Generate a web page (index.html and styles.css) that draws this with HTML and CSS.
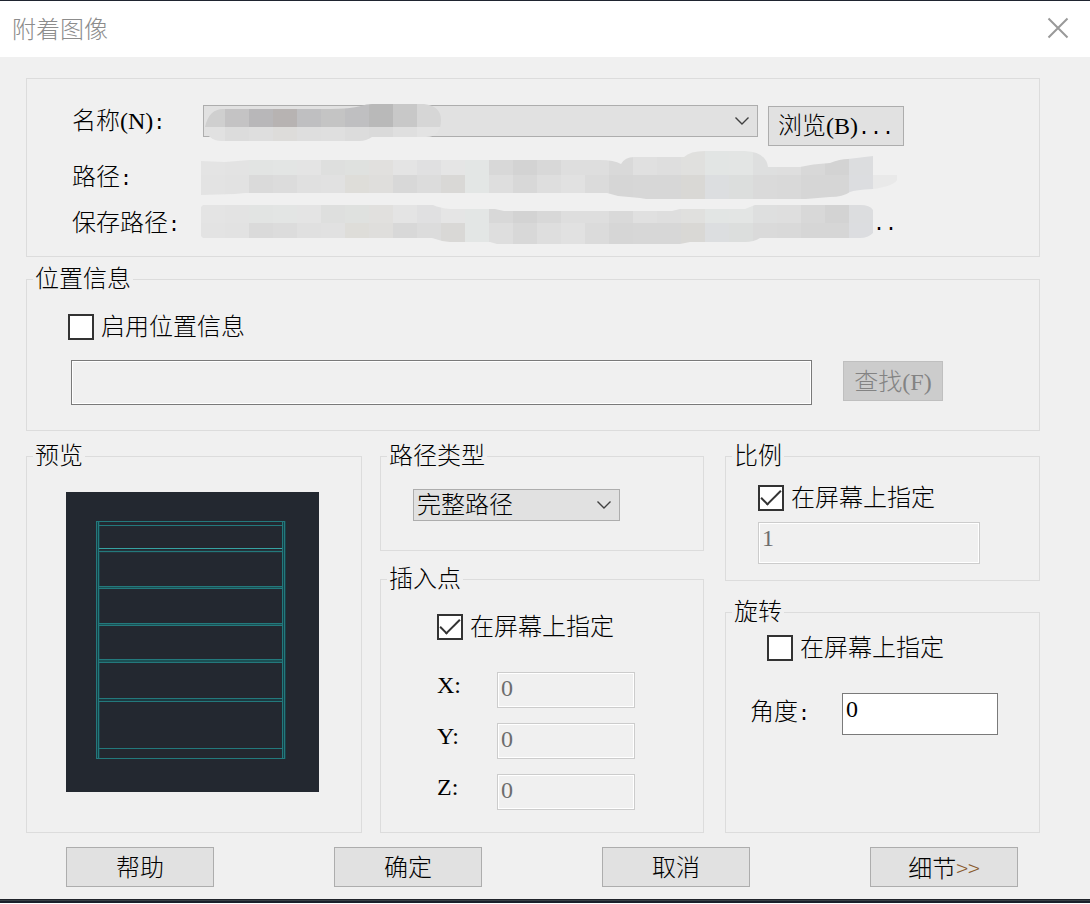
FILE: index.html
```html
<!DOCTYPE html>
<html lang="zh-CN">
<head>
<meta charset="utf-8">
<title>附着图像</title>
<link rel="stylesheet" href="styles.css">
</head>
<body>
<main class="dialog">
  <header class="titlebar">
    <h1 class="title">附着图像</h1>
    <button class="close" type="button" aria-label="关闭">
      <svg width="22" height="22" viewBox="0 0 22 22"><path d="M1.5 1.5 20.5 20.5M20.5 1.5 1.5 20.5"/></svg>
    </button>
  </header>

  <form class="content">
    <section class="group source">
      <label class="source-label" for="name">名称(N)<span class="mono">:</span></label>
      <div class="name-field">
        <div class="select-wrap">
          <select id="name"><option></option></select>
          <svg class="chevron" width="16" height="10" viewBox="0 0 16 10"><path d="M1.5 1.5 8 8 14.5 1.5"/></svg>
        </div>
        <svg class="mask mask-name" data-mask="name" width="236" height="38" viewBox="205 104 236 38"></svg>
      </div>
      <button class="button browse" type="button">浏览(B)<span class="mono">...</span></button>

      <span class="source-label">路径<span class="mono">:</span></span>
      <div class="source-value"><svg class="mask" data-mask="path" width="696" height="52" viewBox="201 151 696 52"></svg></div>

      <span class="source-label">保存路径<span class="mono">:</span></span>
      <div class="source-value"><svg class="mask" data-mask="saved" width="672" height="40" viewBox="201 203 672 40"></svg><span class="mono">..</span></div>
    </section>

    <fieldset class="group location">
      <legend>位置信息</legend>
      <div class="location-body">
        <label class="check"><input type="checkbox"><span>启用位置信息</span></label>
        <div class="location-row">
          <input class="text location-input" type="text" aria-label="位置" readonly>
          <button class="button find" type="button" disabled>查找(F)</button>
        </div>
      </div>
    </fieldset>

    <div class="columns">
      <fieldset class="group preview">
        <legend>预览</legend>
        <svg class="drawing" width="253" height="300" viewBox="0 0 253 300" role="img" aria-label="预览">
          <rect width="253" height="300" fill="#232830"/>
          <g fill="#1b5054">
            <rect x="30" y="29" width="4" height="238" fill="#174249"/>
            <rect x="216" y="29" width="4" height="238" fill="#174249"/>
            <rect x="33" y="58" width="183" height="3" fill="#24343b"/>
            <rect x="33" y="95" width="183" height="2"/>
            <rect x="33" y="131" width="183" height="3"/>
            <rect x="33" y="167" width="183" height="4"/>
            <rect x="33" y="206" width="183" height="4" fill="#1b3940"/>
          </g>
          <g fill="none" stroke="#23797c" stroke-width="1">
            <path d="M30.5 29V267M32.5 29V267M216.5 29V267M218.5 30V267"/>
            <path d="M30 29.5H219M33 33.5H216M33 59.5H216M33 94.5H216M33 96.5H216M33 131.5H216M33 133.5H216M33 167.5H216M33 170.5H216M33 206.5H216M33 209.5H216M33 256.5H216M30 266.5H219"/>
            <path d="M33 56.5H216" stroke="#36a3a2"/>
          </g>
        </svg>
      </fieldset>

      <div class="stack">
        <fieldset class="group path-type">
          <legend>路径类型</legend>
          <div class="select-wrap">
            <select aria-label="路径类型"><option>完整路径</option></select>
            <svg class="chevron" width="16" height="10" viewBox="0 0 16 10"><path d="M1.5 1.5 8 8 14.5 1.5"/></svg>
          </div>
        </fieldset>
        <fieldset class="group insertion grow">
          <legend>插入点</legend>
          <div class="insertion-body">
            <label class="check"><input type="checkbox" checked><span>在屏幕上指定</span></label>
            <div class="coords">
              <label for="x">X:</label><input id="x" class="text" type="text" value="0" disabled>
              <label for="y">Y:</label><input id="y" class="text" type="text" value="0" disabled>
              <label for="z">Z:</label><input id="z" class="text" type="text" value="0" disabled>
            </div>
          </div>
        </fieldset>
      </div>

      <div class="stack stack-wide">
        <fieldset class="group scale">
          <legend>比例</legend>
          <div class="scale-body">
            <label class="check"><input type="checkbox" checked><span>在屏幕上指定</span></label>
            <input class="text" type="text" value="1" aria-label="比例" disabled>
          </div>
        </fieldset>
        <fieldset class="group rotation grow">
          <legend>旋转</legend>
          <div class="rotation-body">
            <label class="check"><input type="checkbox"><span>在屏幕上指定</span></label>
            <div class="angle">
              <label for="angle">角度<span class="mono">:</span></label>
              <input id="angle" class="text" type="text" value="0">
            </div>
          </div>
        </fieldset>
      </div>
    </div>

    <footer class="actions">
      <button class="button" type="button">帮助</button>
      <button class="button" type="button">确定</button>
      <button class="button" type="button">取消</button>
      <button class="button" type="button">细节<span class="more">&gt;&gt;</span></button>
    </footer>
  </form>
</main>
<script src="script.js"></script>
</body>
</html>
```

FILE: styles.css
```css
* {
  box-sizing: border-box;
}

body {
  margin: 0;
  background: #fff;
  color: #000;
  font: 300 24px/24px "Liberation Serif", "Noto Sans CJK SC", serif;
}

input,
select,
button {
  margin: 0;
  color: inherit;
  font: inherit;
}

svg {
  display: block;
  flex: none;
}

.mono {
  font-family: "Liberation Mono", monospace;
  font-size: 20px;
}

.dialog {
  background: #f0f0f0;
  border-top: 1px solid #1f2430;
}

.dialog::after {
  content: "";
  display: block;
  height: 4px;
  background: linear-gradient(#20242a 1px, #3a4147 1px 2px, #1b202b 2px);
}

.titlebar {
  display: flex;
  align-items: center;
  justify-content: space-between;
  height: 56px;
  padding: 0 21px 2px 12px;
  background: #fff;
}

.title {
  margin: 0;
  color: #8c8c8c;
  font: 300 24px/24px "Noto Sans CJK SC", sans-serif;
}

.close {
  padding: 0;
  border: 0;
  background: none;
}

.close path {
  fill: none;
  stroke: #999;
  stroke-width: 2;
}

.content {
  padding: 21px 50px 12px 26px;
}

.group {
  min-width: 0;
  margin: 0;
  padding: 0;
  border: 1px solid #dcdcdc;
}

legend {
  margin-left: 6px;
  padding: 0 2px;
}

.button {
  height: 40px;
  padding: 2px 8px 0;
  border: 1px solid #adadad;
  background: #e1e1e1;
  white-space: nowrap;
}

.button:disabled {
  border-color: #bfbfbf;
  background: #ccc;
  color: #838383;
}

.text {
  display: block;
  min-width: 0;
  padding: 0 3px;
  border: 1px solid #7a7a7a;
  border-radius: 0;
  background: #fff;
}

.text:disabled {
  border-color: #ccc;
  background: #f0f0f0;
  box-shadow: inset 0 0 0 1px #fff;
  color: #6d6d6d;
}

.select-wrap {
  display: grid;
  align-items: center;
}

.select-wrap > * {
  grid-area: 1 / 1;
}

select {
  width: 100%;
  height: 32px;
  padding: 0 3px;
  border: 1px solid #adadad;
  border-radius: 0;
  background: #e1e1e1;
  appearance: none;
}

.chevron {
  justify-self: end;
  margin-right: 8px;
  pointer-events: none;
}

.chevron path {
  fill: none;
  stroke: #404040;
  stroke-width: 1.4;
}

.check {
  display: flex;
  align-items: center;
  gap: 7px;
}

.check input {
  display: grid;
  flex: none;
  place-items: center;
  width: 26px;
  height: 26px;
  border: 2px solid #333;
  background: #fff;
  appearance: none;
}

.check input:checked::before {
  content: "";
  width: 18px;
  height: 8px;
  margin-top: -6px;
  border: solid #333;
  border-width: 0 0 2px 2px;
  transform: rotate(-45deg);
}

.source {
  display: grid;
  grid-template-columns: 129px 1fr 136px;
  grid-template-rows: 46px 52px 40px;
  align-items: center;
  padding: 26px 135px 13px 45px;
}

.source-label {
  padding-top: 2px;
}

.name-field {
  position: relative;
  align-self: start;
  margin: 0 10px 0 2px;
}

.source > .source-label:first-child {
  align-self: start;
  padding-top: 0;
  line-height: 32px;
}

.browse {
  align-self: start;
  margin-top: 1px;
}

.source-value {
  display: flex;
  grid-column: 2 / 4;
  align-items: center;
}

.source-value .mono {
  padding-top: 4px;
}

.mask {
  overflow: visible;
}

.mask-name {
  position: absolute;
  top: -1px;
  left: 2px;
  pointer-events: none;
}

.location {
  margin-top: 10px;
}

.location-body {
  padding: 23px 96px 25px 41px;
}

.location-row {
  display: flex;
  align-items: flex-start;
  gap: 31px;
  margin: 20px 0 0 3px;
}

.location-input {
  flex: 1;
  height: 45px;
  background: #f0f0f0;
  box-shadow: inset 0 0 0 1px #fff;
}

.find {
  width: 100px;
  margin-top: 1px;
}

.columns {
  display: grid;
  grid-template-columns: 336fr 324fr 318fr;
  gap: 18px;
  margin-top: 13px;
}

.drawing {
  margin: 24px 39px 40px;
}

.stack {
  display: flex;
  flex-direction: column;
  gap: 16px;
}

.stack-wide {
  gap: 19px;
  margin-left: 3px;
}

.grow {
  flex: 1;
}

.path-type .select-wrap {
  margin: 21px 83px 29px 32px;
}

.insertion-body {
  padding: 23px 68px 22px 56px;
}

.coords {
  display: grid;
  grid-template-columns: 60px 1fr;
  gap: 15px 0;
  margin-top: 32px;
}

.coords label {
  line-height: 26px;
}

.coords .text {
  height: 36px;
  padding-bottom: 4px;
}

.scale-body {
  padding: 17px 59px 16px 32px;
}

.scale-body .text {
  width: 100%;
  height: 42px;
  margin-top: 11px;
  padding-bottom: 10px;
}

.rotation-body {
  padding: 11px 41px 16px 24px;
}

.rotation-body .check {
  margin-left: 17px;
}

.angle {
  display: grid;
  grid-template-columns: 92px 1fr;
  margin-top: 32px;
}

.angle label {
  line-height: 38px;
}

.angle .text {
  height: 42px;
  padding-bottom: 10px;
}

.actions {
  display: flex;
  justify-content: space-between;
  margin-top: 14px;
  padding: 0 22px 0 40px;
}

.actions .button {
  width: 148px;
}

.more {
  color: #8a5a2c;
  font-family: "Noto Sans CJK SC", sans-serif;
  font-size: 22px;
}
```

FILE: script.js
```js
// Mosaic masks that hide private file names: two rows of 24px tiles, clipped to a brush outline.
const pathTop = "e4e4e4 e3e3e3 e2e4e3 e3e5e4 e4e4e4 dedfde dfe1df e1e0de e4e4e4 e0e0e1 e5e5e5 e3e6e5 d8d8d8 d3d3d3 d8d8d8 dedede dedede d9d9d9 e0e0e0 dedede e0e0de e2e5e4 e3e5e4 dedfdf dedede d8d8d8 d3d3d3 dcdddf efefef";
const pathBottom = "e3e3e3 e2e2e2 dadada dcdcdc e0e0e0 e1e1e1 deddd9 dfdedc d8d8d8 dcdcdc d9d8d6 e3e6e5 dedede d8d8d8 dedede e1e1e1 dbdbdb d6d6d6 d7d7d7 d7d7d7 d9d8d5 dcdee0 dcdedd dadada d9d9d9 d6d6d6 d6d6d6 dcdde0 e9e9e9";
const masks = {
  name: {
    x: 201, top: 104, split: 127, bottom: 142,
    rows: [
      "cfcfcf c4c3c4 b8b7b9 b7b3b2 bfbfc1 c4c4c4 bfbfc1 b9b9b9 c8c8c8 d6d6d6",
      "e1e1e1 dcdcdc dedede dddcda dedede dfdfdf dcdcdc dadada dfdfdf e3e3e3"
    ],
    shape: "M205 127Q209 109 223 109H330Q350 109 361 106Q366 104 372 104H424Q441 106 441 120Q441 137 426 137H372Q366 141 360 141H222Q214 141 210 137Q205 134 205 127Z"
  },
  path: {
    x: 201, top: 148, split: 175, bottom: 202, rows: [pathTop, pathBottom],
    shape: "M201 161L225 162L249 160H600Q614 160 621 164Q625 157 634 157H684Q690 151 705 151L745 151Q766 152 768 167H800Q812 164 830 163Q840 159 848 159L873 156V175H897V180Q894 186 873 189Q855 190 850 192Q843 197 830 197L806 199H646L640 198L618 196L607 193H245L235 194L201 195Z"
  },
  saved: {
    x: 201, top: 204, split: 223, bottom: 246, rows: [pathTop, pathBottom],
    shape: "M201 207L203 205H433Q440 208 450 209H495L504 211H672L680 209H745L755 205H860Q870 205 873 210V233Q868 238 860 238H760Q754 242 745 242H690L680 244H497L490 242H450Q440 241 432 238H203L201 236Z"
  }
};

const ns = "http://www.w3.org/2000/svg";

function add(parent, tag, attributes) {
  const node = document.createElementNS(ns, tag);
  for (const [key, value] of Object.entries(attributes)) node.setAttribute(key, value);
  return parent.appendChild(node);
}

document.querySelectorAll("[data-mask]").forEach((svg) => {
  const name = svg.dataset.mask;
  const mask = masks[name];
  add(add(svg, "clipPath", { id: "clip-" + name }), "path", { d: mask.shape });
  const tiles = add(svg, "g", { "clip-path": "url(#clip-" + name + ")", "shape-rendering": "crispEdges" });
  mask.rows.forEach((row, r) => {
    const y = r ? mask.split : mask.top;
    const height = (r ? mask.bottom : mask.split) - y;
    row.split(" ").forEach((color, i) => {
      add(tiles, "rect", { x: mask.x + i * 24, y, width: 24, height, fill: "#" + color });
    });
  });
});
```
